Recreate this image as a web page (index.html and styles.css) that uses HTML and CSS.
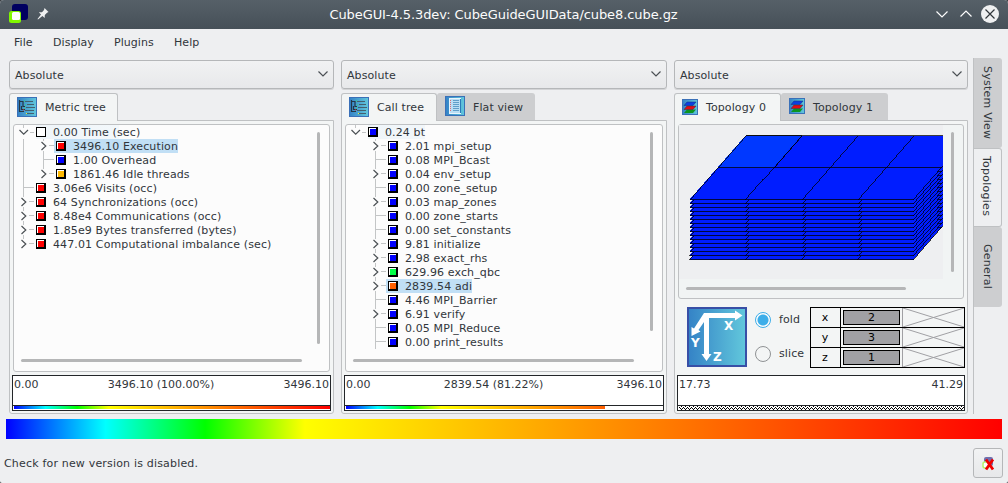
FILE: index.html
```html
<!DOCTYPE html>
<html lang="en">
<head>
<meta charset="utf-8">
<title>CubeGUI</title>
<link rel="stylesheet" href="styles.css">
</head>
<body>
<svg class="defs" width="0" height="0">
  <defs>
    <linearGradient id="tile" x1="0" y1="0" x2="1" y2="0"><stop offset="0" stop-color="#3482c6"/><stop offset="1" stop-color="#62c8dc"/></linearGradient>
    <symbol id="root-open" viewBox="0 0 22 14"><path d="M9.500 0V3M16 7.500H20" stroke="#c3c5c6"/><path d="M5.500 5L9.700 9.200L14 5" stroke="#4b5054" fill="none" stroke-width="1.200"/></symbol>
    <symbol id="root-closed" viewBox="0 0 22 14"><path d="M9.500 0V2M9.500 12V14M15 6.500H20" stroke="#c3c5c6"/><path d="M7.500 3L11.800 7L7.500 11" stroke="#4b5054" fill="none" stroke-width="1.200"/></symbol>
    <symbol id="root-last" viewBox="0 0 22 14"><path d="M9.500 0V2M15 6.500H20" stroke="#c3c5c6"/><path d="M7.500 3L11.800 7L7.500 11" stroke="#4b5054" fill="none" stroke-width="1.200"/></symbol>
    <symbol id="root-leaf" viewBox="0 0 22 14"><path d="M9.500 0V14M9.500 6.500H20" stroke="#c3c5c6"/></symbol>
    <symbol id="sub-closed" viewBox="0 0 42 14"><path d="M29.500 0V2M29.500 12V14M35 6.500H40" stroke="#c3c5c6"/><path d="M27.500 3L31.800 7L27.500 11" stroke="#4b5054" fill="none" stroke-width="1.200"/></symbol>
    <symbol id="sub-last" viewBox="0 0 42 14"><path d="M29.500 0V2M35 6.500H40" stroke="#c3c5c6"/><path d="M27.500 3L31.800 7L27.500 11" stroke="#4b5054" fill="none" stroke-width="1.200"/></symbol>
    <symbol id="sub-leaf" viewBox="0 0 42 14"><path d="M29.500 0V14M29.500 6.500H40" stroke="#c3c5c6"/></symbol>
    <symbol id="trunk" viewBox="0 0 42 14"><path d="M9.500 0V14" stroke="#c3c5c6"/></symbol>
    <symbol id="i-tree" viewBox="0 0 20 20"><rect x=".5" y=".5" width="19" height="19" fill="url(#tile)" stroke="#3a70b8"/><path d="M2.500 3V14.500H7M2.500 4.500H6V9.500H8M4.500 9V12.500H8" stroke="#243746" fill="none" stroke-width="1.200"/><path d="M8 4.500H16M10 7.500H17M9 10.500H18M8 13.500H17M10 16.500H17" stroke="#44606f" stroke-width="1.200"/><path d="M7 4h1M8 8h1M7 11h1" stroke="#36e05c"/><path d="M6 13h1" stroke="#e33"/><path d="M9 16.500h1" stroke="#ee3"/></symbol>
    <symbol id="i-flat" viewBox="0 0 20 20"><rect x=".5" y=".5" width="19" height="19" fill="url(#tile)" stroke="#3a70b8"/><rect x="4.500" y="2.500" width="11" height="15" fill="#b9def5" stroke="#e9f5fc"/><path d="M8 4.500h6M8 6.500h6M8 8.500h6M8 10.500h6M8 12.500h6M8 14.500h6" stroke="#609fc9"/><path d="M5.500 4V16" stroke="#e06a70" stroke-dasharray="1 1"/><path d="M15.500 3V17" stroke="#287ab9"/></symbol>
    <symbol id="i-topo" viewBox="0 0 16 16"><rect x=".5" y=".5" width="15" height="15" fill="url(#tile)" stroke="#3a70b8"/><path d="M2 14L5 10.500H14L11 14Z" fill="#0b9520"/><path d="M2 10.500L5 7H14L11 10.500Z" fill="#e00d15" stroke="#343044" stroke-width=".5"/><path d="M2 6.500L5 3H14L11 6.500Z" fill="#0b3fe0" stroke="#133175" stroke-width=".5"/></symbol>
    <symbol id="i-down" viewBox="0 0 12 8"><path d="M1.500 1.500L6 6L10.500 1.500" fill="none" stroke="#4b5054" stroke-width="1.200"/></symbol>
    <g id="layer" stroke-width=".75"><path d="M11.500 75.500L67.500 11.500H291.500L235.500 75.500Z" fill="#001dff" stroke="#000"/><path d="M67.500 75.500L123.500 11.500M123.500 75.500L179.500 11.500M179.500 75.500L235.500 11.500M39.500 43.500H263.500" fill="none" stroke="#000"/></g>
  </defs>
</svg>
<header class="titlebar">
  <svg class="app-icon" width="20" height="20" viewBox="0 0 20 20"><rect x="3" y="0" width="16" height="16" rx="3" fill="#000060"/><rect x="0" y="7" width="12" height="12" rx="2.500" fill="#80f800"/><rect x="3" y="8" width="8" height="8" rx="1.500" fill="#fff"/></svg>
  <svg class="pin" width="12" height="12" viewBox="0 0 12 12"><path d="M7.500 0L11.500 4L10 4.700L7.800 7L7.700 10L5.400 8L1 11.500L0.500 11L4 6.600L1.800 4.300L5 4.200L7 2Z" fill="#eff0f1"/></svg>
  <h1 class="title">CubeGUI-4.5.3dev: CubeGuideGUIData/cube8.cube.gz</h1>
  <svg class="wm" width="66" height="20" viewBox="0 0 66 20"><path d="M1.500 7.500L7 13L12.500 7.500M25.500 12.500L31 7L36.500 12.500" fill="none" stroke="#fcfcfc" stroke-width="1.200"/><circle cx="55" cy="10" r="9" fill="#eff0f1"/><path d="M50.500 5.500L59.500 14.500M59.500 5.500L50.500 14.500" stroke="#31363b" stroke-width="1.200"/></svg>
</header>
<nav class="menubar"><span class="m1">File</span><span class="m2">Display</span><span class="m3">Plugins</span><span class="m4">Help</span></nav>
<main class="main">
  <section class="column">
    <div class="combo"><span>Absolute</span><svg width="12" height="8"><use href="#i-down"/></svg></div>
    <div class="tabs"><div class="tab active t-metric"><svg width="20" height="20"><use href="#i-tree"/></svg><span>Metric tree</span></div></div>
    <div class="pane">
      <div class="frame">
        <div class="tree">
          <div class="row"><svg width="22" height="14"><use href="#root-open"/></svg><span class="item cur"><i class="box white"></i>0.00 Time (sec)</span></div>
          <div class="row"><svg width="42" height="14"><use href="#trunk"/><use href="#sub-closed"/></svg><span class="item sel"><i class="box red"></i>3496.10 Execution</span></div>
          <div class="row"><svg width="42" height="14"><use href="#trunk"/><use href="#sub-leaf"/></svg><span class="item"><i class="box blue"></i>1.00 Overhead</span></div>
          <div class="row"><svg width="42" height="14"><use href="#trunk"/><use href="#sub-last"/></svg><span class="item"><i class="box amber"></i>1861.46 Idle threads</span></div>
          <div class="row"><svg width="22" height="14"><use href="#root-leaf"/></svg><span class="item"><i class="box red"></i>3.06e6 Visits (occ)</span></div>
          <div class="row"><svg width="22" height="14"><use href="#root-closed"/></svg><span class="item"><i class="box red"></i>64 Synchronizations (occ)</span></div>
          <div class="row"><svg width="22" height="14"><use href="#root-closed"/></svg><span class="item"><i class="box red"></i>8.48e4 Communications (occ)</span></div>
          <div class="row"><svg width="22" height="14"><use href="#root-closed"/></svg><span class="item"><i class="box red"></i>1.85e9 Bytes transferred (bytes)</span></div>
          <div class="row"><svg width="22" height="14"><use href="#root-last"/></svg><span class="item"><i class="box red"></i>447.01 Computational imbalance (sec)</span></div>
        </div>
        <div class="vbar"><div class="vthumb tall"></div></div>
        <div class="hbar"><div class="hthumb"></div></div>
      </div>
      <div class="values"><div class="nums"><span>0.00</span><span>3496.10 (100.00%)</span><span>3496.10</span></div><div class="scale"><div class="spectrum"></div></div></div>
    </div>
  </section>
  <section class="column">
    <div class="combo"><span>Absolute</span><svg width="12" height="8"><use href="#i-down"/></svg></div>
    <div class="tabs"><div class="tab active t-call"><svg width="20" height="20"><use href="#i-tree"/></svg><span>Call tree</span></div><div class="tab t-flat"><svg width="20" height="20"><use href="#i-flat"/></svg><span>Flat view</span></div></div>
    <div class="pane">
      <div class="frame">
        <div class="tree">
          <div class="row"><svg width="22" height="14"><use href="#root-open"/></svg><span class="item cur"><i class="box blue"></i>0.24 bt</span></div>
          <div class="row"><svg width="42" height="14"><use href="#sub-closed"/></svg><span class="item"><i class="box blue"></i>2.01 mpi_setup</span></div>
          <div class="row"><svg width="42" height="14"><use href="#sub-leaf"/></svg><span class="item"><i class="box blue"></i>0.08 MPI_Bcast</span></div>
          <div class="row"><svg width="42" height="14"><use href="#sub-closed"/></svg><span class="item"><i class="box blue"></i>0.04 env_setup</span></div>
          <div class="row"><svg width="42" height="14"><use href="#sub-leaf"/></svg><span class="item"><i class="box blue"></i>0.00 zone_setup</span></div>
          <div class="row"><svg width="42" height="14"><use href="#sub-closed"/></svg><span class="item"><i class="box blue"></i>0.03 map_zones</span></div>
          <div class="row"><svg width="42" height="14"><use href="#sub-leaf"/></svg><span class="item"><i class="box blue"></i>0.00 zone_starts</span></div>
          <div class="row"><svg width="42" height="14"><use href="#sub-leaf"/></svg><span class="item"><i class="box blue"></i>0.00 set_constants</span></div>
          <div class="row"><svg width="42" height="14"><use href="#sub-closed"/></svg><span class="item"><i class="box blue"></i>9.81 initialize</span></div>
          <div class="row"><svg width="42" height="14"><use href="#sub-closed"/></svg><span class="item"><i class="box blue"></i>2.98 exact_rhs</span></div>
          <div class="row"><svg width="42" height="14"><use href="#sub-closed"/></svg><span class="item"><i class="box green"></i>629.96 exch_qbc</span></div>
          <div class="row"><svg width="42" height="14"><use href="#sub-closed"/></svg><span class="item sel"><i class="box orange"></i>2839.54 adi</span></div>
          <div class="row"><svg width="42" height="14"><use href="#sub-leaf"/></svg><span class="item"><i class="box blue"></i>4.46 MPI_Barrier</span></div>
          <div class="row"><svg width="42" height="14"><use href="#sub-closed"/></svg><span class="item"><i class="box blue"></i>6.91 verify</span></div>
          <div class="row"><svg width="42" height="14"><use href="#sub-leaf"/></svg><span class="item"><i class="box blue"></i>0.05 MPI_Reduce</span></div>
          <div class="row"><svg width="42" height="14"><use href="#sub-leaf"/></svg><span class="item"><i class="box blue"></i>0.00 print_results</span></div>
        </div>
        <div class="vbar"><div class="vthumb mid"></div></div>
        <div class="hbar"><div class="hthumb"></div></div>
      </div>
      <div class="values"><div class="nums"><span>0.00</span><span>2839.54 (81.22%)</span><span>3496.10</span></div><div class="scale"><div class="spectrum part"></div></div></div>
    </div>
  </section>
  <section class="column">
    <div class="combo"><span>Absolute</span><svg width="12" height="8"><use href="#i-down"/></svg></div>
    <div class="tabs"><div class="tab active t-topo0"><svg width="16" height="16"><use href="#i-topo"/></svg><span>Topology 0</span></div><div class="tab t-topo1"><svg width="16" height="16"><use href="#i-topo"/></svg><span>Topology 1</span></div></div>
    <div class="pane">
      <div class="frame topo">
        <svg class="canvas" width="264" height="154" viewBox="1 1 264 154" shape-rendering="crispEdges">
          <use href="#layer" y="60"/><use href="#layer" y="56"/><use href="#layer" y="52"/><use href="#layer" y="48"/>
          <use href="#layer" y="44"/><use href="#layer" y="40"/><use href="#layer" y="36"/><use href="#layer" y="32"/>
          <use href="#layer" y="28"/><use href="#layer" y="24"/><use href="#layer" y="20"/><use href="#layer" y="16"/>
          <use href="#layer" y="12"/><use href="#layer" y="8"/><use href="#layer" y="4"/><use href="#layer"/>
          <path d="M39.500 43.500L67.500 11.500H123.500L95.500 43.500Z" fill="#0038ff" stroke="#000" stroke-width=".75"/>
        </svg>
        <div class="vbar"><div class="vthumb short"></div></div>
        <div class="hbar"><div class="hthumb topo-thumb"></div></div>
      </div>
      <div class="controls">
        <svg class="axes" width="60" height="60" viewBox="0 0 60 60"><rect x="1" y="1" width="58" height="58" fill="url(#tile)" stroke="#384fa6" stroke-width="2"/><path d="M17 6H48V3.500L55.500 8.500L48 13.500V11H22V47H24.500L19.500 54L14.500 47H17V15L11.500 23L13.500 24.500L4.500 29L4.500 20L7 21.500Z" fill="#fff"/><text x="37" y="23">X</text><text x="4" y="40">Y</text><text x="26" y="54">Z</text></svg>
        <div class="radios"><label><i class="radio on"></i>fold</label><label><i class="radio"></i>slice</label></div>
        <div class="dims">
          <span>x</span><b><em>2</em></b><svg width="61" height="19"><path d="M0 0L61 19M61 0L0 19" stroke="#a0a0a4"/></svg>
          <span>y</span><b><em>3</em></b><svg width="61" height="19"><path d="M0 0L61 19M61 0L0 19" stroke="#a0a0a4"/></svg>
          <span>z</span><b><em>1</em></b><svg width="61" height="19"><path d="M0 0L61 19M61 0L0 19" stroke="#a0a0a4"/></svg>
        </div>
      </div>
      <div class="values"><div class="nums"><span>17.73</span><span>41.29</span></div><div class="scale"><svg class="zigzag" width="285" height="4" shape-rendering="crispEdges"><defs><pattern id="zz" width="4" height="4" patternUnits="userSpaceOnUse"><path d="M0 1h1v1h-1zM1 2h1v1h-1zM2 3h1v1h-1zM3 2h1v1h-1zM2 0h1v1h-1z"/></pattern></defs><rect width="285" height="4" fill="url(#zz)"/></svg></div></div>
    </div>
  </section>
  <aside class="side"><div class="stab s1"><span>System View</span></div><div class="stab active s2"><span>Topologies</span></div><div class="stab s3"><span>General</span></div></aside>
</main>
<div class="rainbow spectrum"></div>
<footer class="status"><span>Check for new version is disabled.</span><div class="button"><svg width="14" height="14" viewBox="0 0 14 14"><rect x="2" y="0" width="9" height="9" rx="2" fill="#7070ae"/><rect x="1" y="5" width="6" height="6" rx="2" fill="#fff" stroke="#b4f46c" stroke-width="1.500"/><path d="M4 2.500L11 12.500M11 2.500L4 12.500" stroke="#f00000" stroke-width="2.800"/></svg></div></footer>
</body>
</html>
```
FILE: styles.css
```css
* { box-sizing: border-box; }
html { background: #3b4045; }
body { margin: 0; width: 1008px; height: 483px; overflow: hidden; display: flex; flex-direction: column; background: #eeeff1; color: #31363b; font: 11px/14px "DejaVu Sans", sans-serif; border-radius: 4px 4px 2px 2px; }
svg { display: block; flex: none; }
.defs { position: absolute; }

.titlebar { height: 29px; flex: none; display: flex; align-items: center; padding: 0 7px 0 9px; background: linear-gradient(#566068, #465058); color: #fcfcfc; }
.app-icon { margin-top: -1px; }
.pin { margin-left: 8px; margin-top: -2px; }
.wm { margin-top: -1px; }
.title { flex: 1; margin: 0; font-size: 13px; font-weight: 400; line-height: 29px; text-align: center; padding-left: 23px; letter-spacing: -0.08px; }
.menubar { height: 31px; flex: none; display: flex; padding: 7px 0 0 14px; letter-spacing: 0.05px; }
.m1 { width: 39px; }
.m2 { width: 61px; }
.m3 { width: 60px; }

.main { height: 354px; flex: none; display: grid; grid-template-columns: 325px 326px 294px 30px; column-gap: 7px; padding-left: 9px; }
.column { display: flex; flex-direction: column; min-width: 0; }
.combo { height: 29px; flex: none; display: flex; justify-content: space-between; align-items: center; padding: 2px 4px 0 5px; border: 1px solid #b5b7b9; border-radius: 3px; background: linear-gradient(#f1f2f3, #e7e8ea); box-shadow: 0 1px 0 #d3d4d6; letter-spacing: 0.1px; }
.combo svg { margin-top: -4px; }
.tabs { height: 32px; flex: none; display: flex; padding-top: 4px; position: relative; z-index: 1; margin-bottom: -1px; letter-spacing: 0.1px; }
.tab { height: 27px; display: flex; align-items: center; background: #cdced0; border-radius: 3px 3px 0 0; }
.tab span { padding-top: 2px; }
.tab.active span { padding-top: 1px; }
.tab.active { height: 28px; background: #f3f5f5; border: 1px solid #bfc1c3; border-bottom: 0; }
.t-metric { width: 109px; padding-left: 7px; gap: 8px; }
.t-call { width: 96px; padding-left: 7px; gap: 8px; }
.t-flat { width: 98px; padding-left: 8px; gap: 8px; }
.t-topo0 { width: 107px; padding-left: 7px; gap: 8px; }
.t-topo1 { width: 107px; padding-left: 8px; gap: 8px; }
.tab.active svg { margin-top: -2px; }
.tab svg { margin-top: -1px; }
.pane { height: 294px; flex: none; padding: 3px 2px 1px; border: 1px solid #bfc1c3; border-radius: 0 0 3px 3px; background: #f3f5f5; }
.frame { height: 248px; margin: 0 1px; border: 1px solid #bfc1c3; border-radius: 3px; background: #fcfcfc; display: grid; grid-template: 224px 22px / 1fr 20px; }
.tree { overflow: hidden; letter-spacing: 0.12px; }
.row { height: 14px; display: flex; white-space: nowrap; }
.item { display: flex; align-items: center; line-height: 14px; height: 14px; padding-top: 1px; }
.item .box { margin-top: -1px; }
.cur { background: linear-gradient(90deg, #eff5f9, #f3f8fb); background-size: 83px 100%; background-repeat: no-repeat; }
.sel { background: #c1dff5; margin-left: -2px; padding-left: 2px; }
.box { width: 10px; height: 10px; margin-right: 7px; border: 1px solid #000; border-right-width: 2px; border-bottom-width: 2px; box-shadow: inset 1px 1px 0 #fff; }
.white { background: #fff; border-width: 1px; }
.red { background: #f00; }
.blue { background: #00f; }
.amber { background: #ffb900; }
.green { background: #00ff46; }
.orange { background: #ff5f00; }
.vbar { padding: 7px 0 0 8px; }
.vthumb { width: 3px; border-radius: 2px; background: #b5b6b7; }
.tall { height: 212px; }
.mid { height: 199px; }
.short { height: 140px; }
.hbar { padding: 10px 0 0 7px; }
.hthumb { width: 281px; height: 3px; border-radius: 2px; background: #b5b6b7; }

.values { height: 36px; margin-top: 3px; border: 1px solid #232629; background: #fff; display: flex; flex-direction: column; justify-content: space-between; }
.nums { display: flex; justify-content: space-between; padding: 2px 1px 0; }
.scale { height: 5px; border-top: 1px solid #232629; padding-left: 1px; }
.scale .spectrum { height: 3px; }
.spectrum { background: linear-gradient(90deg, #00f 0, #0ff 10%, #0f0 20%, #ff0 30%, #f00 100%); }
.scale .part { width: 81.700%; background: linear-gradient(90deg, #00f, #0ff 12.200%, #0f0 24.500%, #ff0 36.700%, #ff5f00); }

.topo { height: 175px; background: #f1f4f4; grid-template: 154px 19px / 264px 20px; }
.canvas { background: #eeeff1; }
.topo .hbar { padding-top: 8px; }
.topo-thumb { width: 220px; }
.controls { height: 76px; display: flex; padding: 8px 0 0 10px; }
.controls + .values { margin-top: 0; }
.radios { width: 63px; margin-left: 8px; display: flex; flex-direction: column; gap: 18px; padding-top: 5px; letter-spacing: 0.1px; }
.radios label { display: flex; align-items: center; height: 16px; gap: 8px; }
.radio { width: 16px; height: 16px; border: 1px solid #8f9294; border-radius: 50%; }
.radio.on { border-color: #3daee9; background: radial-gradient(circle, #3daee9 5px, #fcfcfc 6px); }
.axes text { font: bold 12px "DejaVu Sans", sans-serif; fill: #fff; }
.dims { flex: none; width: 155px; height: 61px; display: grid; grid-template: repeat(3, 19px) / 30px 62px 61px; row-gap: 1px; background: #000; border: 1px solid #000; color: #000; margin-left: -8px; }
.radios + .dims { margin-left: -8px; }
.radios { width: 71px; flex: none; margin-left: 8px; }
.controls .dims { margin-left: -16px; }
.dims span, .dims b { background: #f3f5f5; text-align: center; font-weight: 400; line-height: 20px; height: 19px; overflow: hidden; }
.dims span { border-right: 1px solid #000; padding-right: 1px; }
.dims b { padding: 2px; border-right: 1px solid #a0a0a4; }
.dims em { display: block; width: 57px; height: 15px; border: 1px solid #000; background: #a0a0a4; line-height: 14px; font-style: normal; }
.dims svg { background: #f3f5f5; }

.side { margin: -2px 0 0 -2px; display: flex; flex-direction: column; border-left: 1px solid #bfc1c3; letter-spacing: 0.25px; }
.stab { width: 28px; padding-right: 3px; background: #cdced0; border-radius: 0 3px 3px 0; display: flex; align-items: center; justify-content: center; writing-mode: vertical-rl; }
.s1 { height: 90px; }
.s2 { height: 79px; padding-bottom: 2px; }
.s3 { height: 80px; }
.stab.active { background: #eeeff1; border: 1px solid #bfc1c3; border-left: 0; }
.rainbow { height: 20px; flex: none; width: 996px; margin: 5px 0 0 6px; }
.status { flex: 1; display: flex; justify-content: space-between; align-items: center; padding: 4px 5px 0 4px; letter-spacing: 0.18px; }
.status > span { padding-top: 1px; }
.button { width: 30px; height: 30px; border: 1px solid #b5b7b9; border-radius: 3px; background: linear-gradient(#f2f3f4, #e7e8ea); display: flex; align-items: center; justify-content: center; padding: 2px 0 0 2px; }
```
